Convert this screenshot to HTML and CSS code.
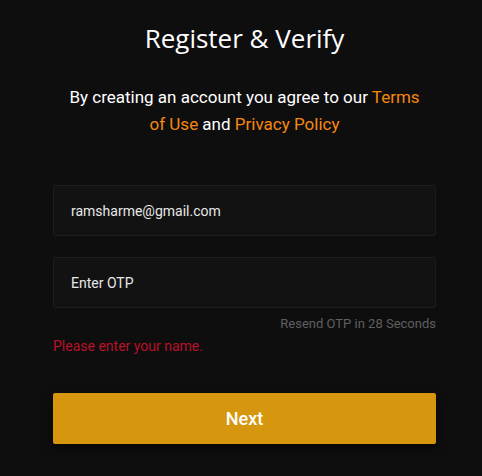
FILE: index.html
```html
<!DOCTYPE html>
<html lang="en">
<head>
<meta charset="utf-8">
<title>Register &amp; Verify</title>
<link rel="stylesheet" href="styles.css">
</head>
<body>
<main class="card">
  <h1 class="title">Register &amp; Verify</h1>
  <p class="lead">By creating an account you agree to our <a href="#" class="link">Terms</a><br><a href="#" class="link">of Use</a> and <a href="#" class="link">Privacy Policy</a></p>
  <form class="form">
    <div class="field"><input class="input" type="email" value="ramsharme@gmail.com"></div>
    <div class="field"><input class="input" type="text" placeholder="Enter OTP"></div>
    <div class="resend">Resend OTP in 28 Seconds</div>
    <div class="error">Please enter your name.</div>
    <button type="button" class="btn">Next</button>
  </form>
</main>
</body>
</html>
```
FILE: styles.css
```css
html, body {
  margin: 0;
  padding: 0;
  height: 100%;
}
body {
  background: #0f0e0f;
  font-family: Roboto, "Liberation Sans", sans-serif;
  color: #fff;
}
.card {
  width: 383px;
  margin: 0 0 0 53px;
  padding-top: 21px;
  display: flex;
  flex-direction: column;
}
.title {
  margin: 0;
  text-align: center;
  font-family: "Open Sans", Lato, sans-serif;
  font-weight: 400;
  font-size: 26px;
  line-height: 34px;
  color: #fff;
}
.lead {
  margin: 29px 0 0;
  text-align: center;
  font-size: 17px;
  line-height: 27px;
  color: #fff;
}
.link {
  color: #f5880e;
  text-decoration: none;
}
.form {
  margin-top: 47px;
  display: flex;
  flex-direction: column;
}
.field {
  margin-bottom: 21px;
}
.field:nth-child(2) {
  margin-bottom: 8px;
}
.input {
  box-sizing: border-box;
  width: 100%;
  height: 51px;
  background: #121212;
  border: 1px solid #1d1d1d;
  border-radius: 2px;
  padding: 0 17px;
  font-family: Roboto, "Liberation Sans", sans-serif;
  font-size: 14px;
  color: #e8e8e8;
  outline: none;
}
.input::placeholder {
  color: #e8e8e8;
  opacity: 1;
}
.resend {
  text-align: right;
  font-size: 13px;
  line-height: 16px;
  color: #5f5f5f;
}
.error {
  margin-top: 5px;
  font-size: 14px;
  line-height: 18px;
  color: #b8112a;
}
.btn {
  margin-top: 38px;
  height: 51px;
  border: none;
  border-radius: 2px;
  background: #d6970e;
  color: #fff;
  font-family: Roboto, "Liberation Sans", sans-serif;
  font-size: 18px;
  font-weight: 500;
  box-shadow: 0 4px 8px rgba(0,0,0,0.5);
  cursor: pointer;
}
```
